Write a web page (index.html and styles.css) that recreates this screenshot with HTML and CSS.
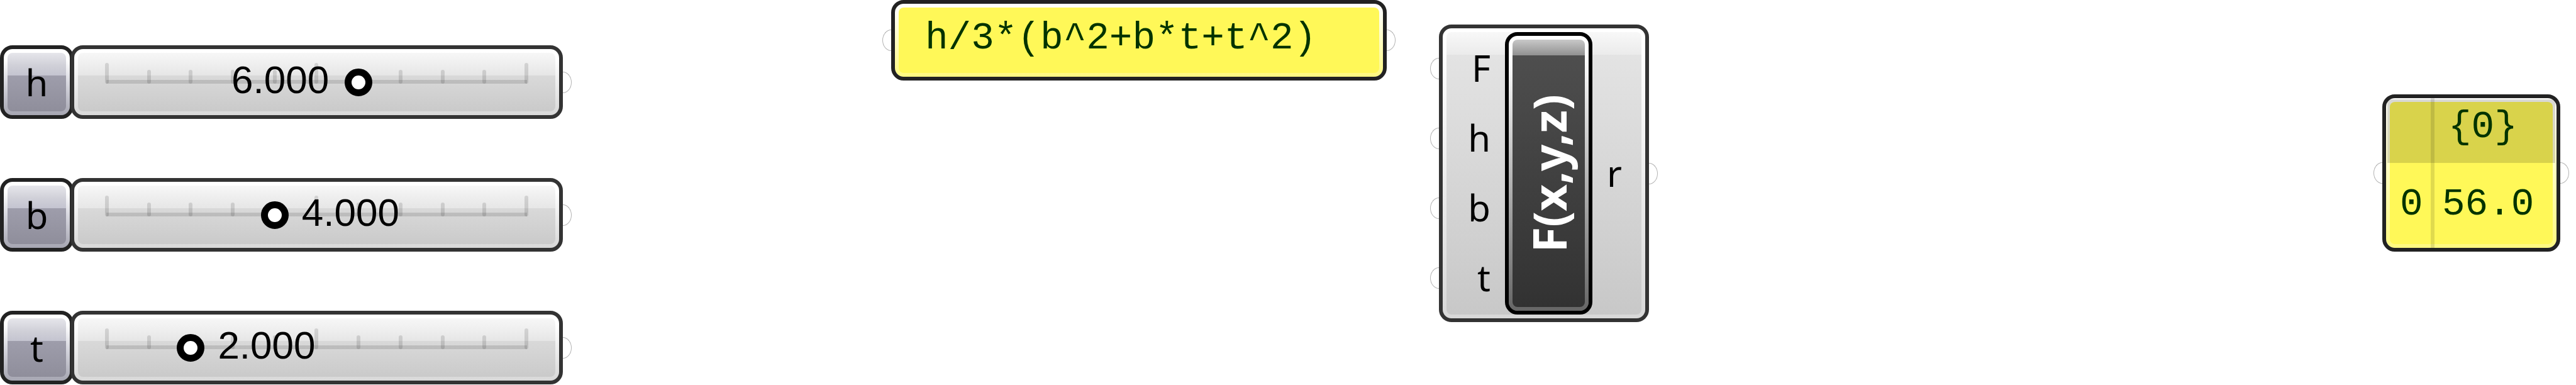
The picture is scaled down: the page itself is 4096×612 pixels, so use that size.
FILE: index.html
```html
<!DOCTYPE html>
<html lang="en">
<head>
<meta charset="utf-8">
<title>Frustum volume definition</title>
<link rel="stylesheet" href="styles.css">
</head>
<body>
<main class="canvas">
  <section class="sliders">
    <div class="slider">
      <label class="capsule tag" for="h">h</label>
      <div class="capsule track">
        <div class="ticks"><i></i><i></i><i></i><i></i><i></i><i></i><i></i><i></i><i></i><i></i><i></i></div>
        <output class="value before" for="h" style="--v: 6">6.000</output>
        <input type="range" id="h" min="0" max="10" step="0.001" value="6">
        <span class="grip out"></span>
      </div>
    </div>
    <div class="slider">
      <label class="capsule tag" for="b">b</label>
      <div class="capsule track">
        <div class="ticks"><i></i><i></i><i></i><i></i><i></i><i></i><i></i><i></i><i></i><i></i><i></i></div>
        <output class="value" for="b" style="--v: 4">4.000</output>
        <input type="range" id="b" min="0" max="10" step="0.001" value="4">
        <span class="grip out"></span>
      </div>
    </div>
    <div class="slider">
      <label class="capsule tag" for="t">t</label>
      <div class="capsule track">
        <div class="ticks"><i></i><i></i><i></i><i></i><i></i><i></i><i></i><i></i><i></i><i></i><i></i></div>
        <output class="value" for="t" style="--v: 2">2.000</output>
        <input type="range" id="t" min="0" max="10" step="0.001" value="2">
        <span class="grip out"></span>
      </div>
    </div>
  </section>

  <section class="capsule panel expression">
    <span class="grip in"></span>
    <p>h/3*(b^2+b*t+t^2)</p>
    <span class="grip out"></span>
  </section>

  <section class="capsule component">
    <ul class="ports inputs">
      <li><span class="grip in"></span>F</li>
      <li><span class="grip in"></span>h</li>
      <li><span class="grip in"></span>b</li>
      <li><span class="grip in"></span>t</li>
    </ul>
    <h2 class="capsule name"><span>F(x,y,z)</span></h2>
    <ul class="ports outputs">
      <li>r<span class="grip out"></span></li>
    </ul>
  </section>

  <section class="capsule panel result">
    <span class="grip in"></span>
    <table>
      <thead><tr><td></td><th scope="col">{0}</th></tr></thead>
      <tbody><tr><th scope="row">0</th><td>56.0</td></tr></tbody>
    </table>
    <span class="grip out"></span>
  </section>
</main>
</body>
</html>
```
FILE: styles.css
```css
* { box-sizing: border-box; }

body {
  margin: 0;
  background: #fff;
  color: #000;
  font-family: "Noto Sans", "Open Sans", sans-serif;
  font-size: 58px;
}

.canvas {
  position: relative;
  min-height: 100vh;
  overflow: hidden;
}

/* Glossy rounded body: dark edge, light ring, shaded fill */
.capsule {
  position: relative;
  border: 6px solid var(--edge);
  border-radius: 20px;
  padding: 6px;
  background:
    linear-gradient(var(--fill)) content-box,
    linear-gradient(var(--ring)) padding-box;
}

/* Wire grips on the left and right edges */
.grip {
  position: absolute;
  top: calc(50% - 17px);
  width: 14px;
  height: 34px;
  border: 1px solid #b4b4b4;
}
.grip.in {
  left: -20px;
  border-right: 0;
  border-radius: 14px 0 0 14px / 17px 0 0 17px;
}
.grip.out {
  right: -20px;
  border-left: 0;
  border-radius: 0 14px 14px 0 / 0 17px 17px 0;
}

/* Sliders */
.sliders {
  display: grid;
  gap: 94px;
  width: 895px;
  padding-top: 72px;
}
.slider {
  display: flex;
  height: 117px;
}
.tag {
  --edge: #222;
  --fill: #e6e6eb, #d0d0d8 20px, #c4c4d0 36px, #9e9dab 36px, #8f8e9b;
  --ring: #fff, #fff 16px, #d8d8e0 50%, #a6a6b2;
  display: flex;
  align-items: center;
  justify-content: center;
  width: 117px;
  line-height: 90px;
}
.track {
  --edge: #333;
  --fill: #f7f7f7, #e6e6e6 36px, #d9d9d9 36px, #cacaca;
  --ring: #fff, #fff 16px, #d8d8d8;
  flex: 1;
  display: grid;
  margin-left: -5px;
}
.track > .ticks,
.track > .value,
.track > input { grid-area: 1 / 1; }

.ticks {
  align-self: start;
  display: flex;
  justify-content: space-between;
  align-items: flex-end;
  height: 33px;
  margin: 16px 43px 0;
  background: linear-gradient(rgba(0, 0, 0, .12), rgba(0, 0, 0, .12)) center bottom / calc(100% - 4px) 6px no-repeat;
}
.ticks i {
  width: 6px;
  height: 22px;
  border-radius: 3px;
  background: rgba(0, 0, 0, .12);
}
.ticks i:nth-child(5n + 1) { height: 33px; }

.value {
  align-self: center;
  justify-self: start;
  margin-left: calc(89px + (100% - 92px) * var(--v) / 10);
  padding-bottom: 8px;
  font: 62px/70px "Liberation Sans", Arial, sans-serif;
}
.value.before {
  justify-self: end;
  margin: 0 calc(93px + (100% - 92px) * (10 - var(--v)) / 10) 0 0;
}

input[type="range"] {
  -webkit-appearance: none;
  appearance: none;
  align-self: center;
  min-width: 0;
  height: 44px;
  margin: 0 24px;
  background: none;
}
input[type="range"]::-webkit-slider-thumb {
  -webkit-appearance: none;
  width: 44px;
  height: 44px;
  border: 11px solid #000;
  border-radius: 50%;
  background: #fff;
}

/* Yellow panels */
.panel {
  --edge: #222;
  --fill: #fff858, #fff858;
  --ring: #fffffc, #fffff4 16px, #fff980;
  color: #030;
  font: 61px/69px "Liberation Mono", "Courier New", monospace;
}
.expression {
  position: absolute;
  left: 1417px;
  top: 0;
  width: 788px;
  height: 128px;
}
.expression p {
  margin: 0;
  padding: 14px 42px;
}
.result {
  position: absolute;
  left: 3788px;
  top: 150px;
  width: 283px;
  height: 250px;
}
.result table {
  width: 271px;
  height: 238px;
  margin: -6px;
  border-collapse: collapse;
  background:
    linear-gradient(rgba(0, 0, 0, .15), rgba(0, 0, 0, .15)) 2px 2px / 267px 101px no-repeat,
    linear-gradient(rgba(0, 0, 0, .12), rgba(0, 0, 0, .12)) 71px 0 / 6px 100% no-repeat;
}
.result th,
.result td {
  padding: 31px 0 0 12px;
  font-weight: 400;
  text-align: left;
  vertical-align: top;
}
.result thead tr { height: 103px; }
.result thead th { padding: 11px 0 0 22px; }
.result tbody th {
  width: 77px;
  padding-left: 22px;
}

/* Evaluate component */
.component {
  --edge: #333;
  --fill: #f8f8f8, #ebebeb 36px, #e3e3e3 36px, #c8c8c8;
  --ring: #fff, #fff 36px, #d8d8d8;
  position: absolute;
  left: 2288px;
  top: 39px;
  display: grid;
  grid-template-columns: 93px 139px 1fr;
  width: 334px;
  height: 473px;
}
.ports {
  display: flex;
  flex-direction: column;
  margin: 0;
  padding: 2px 0;
  list-style: none;
}
.ports li {
  position: relative;
  flex: 1;
  display: flex;
  align-items: center;
  padding-bottom: 2px;
  line-height: 78px;
}
.ports .in { left: -26px; }
.ports .out { right: -26px; }
.inputs li {
  justify-content: flex-end;
  padding-right: 23px;
}
.outputs li { padding-left: 23px; }
.name {
  --edge: #000;
  --fill: #c8c8c8, #919191 25px, #4e4e4e 25px, #323232;
  --ring: #fff, #fff 30px, #666;
  display: flex;
  align-items: center;
  justify-content: center;
  margin: 0;
  color: #fff;
  font-size: 74px;
  font-weight: 700;
  line-height: 100px;
}
.name span {
  writing-mode: vertical-rl;
  transform: rotate(180deg);
}
```
